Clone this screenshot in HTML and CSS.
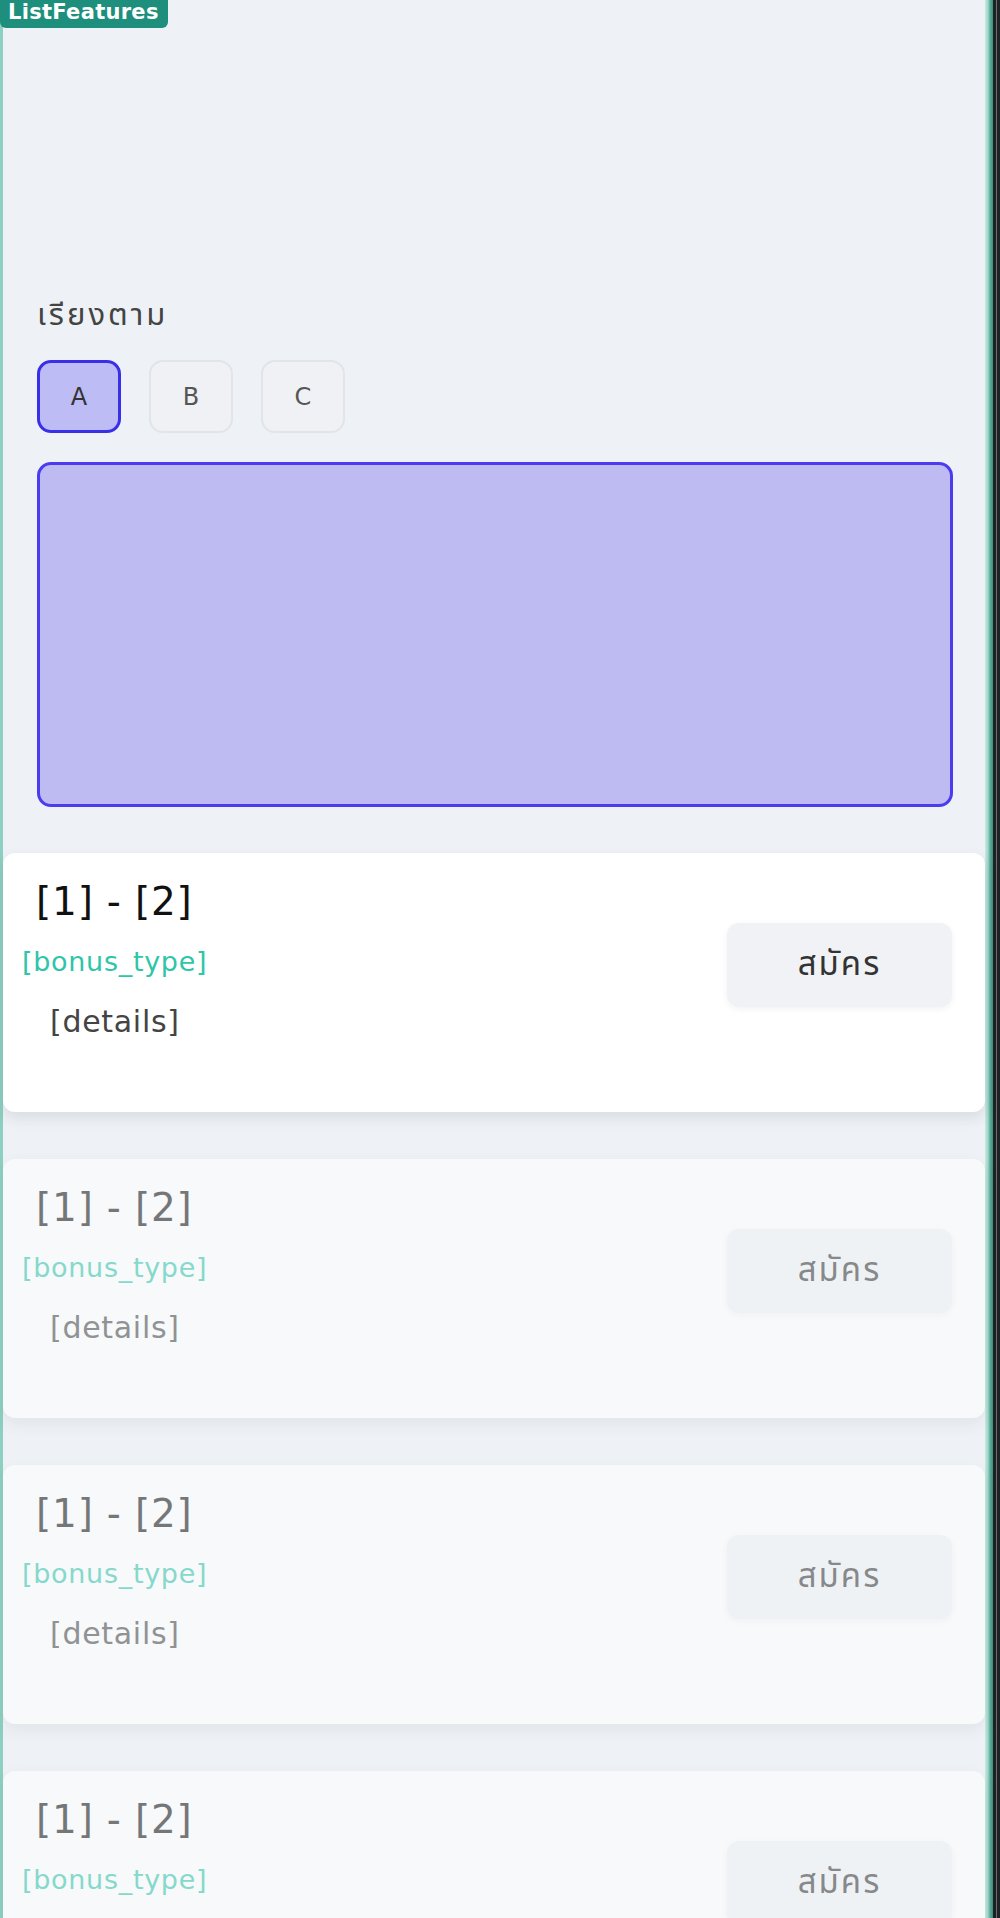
FILE: index.html
```html
<!DOCTYPE html>
<html lang="th">
<head>
<meta charset="utf-8">
<title>ListFeatures</title>
<link rel="stylesheet" href="styles.css">
</head>
<body>
<div class="page">
  <div class="frame">
    <div class="badge">ListFeatures</div>
    <section class="sort">
      <div class="sort-label">เรียงตาม</div>
      <div class="sort-buttons">
        <button class="chip chip-active">A</button>
        <button class="chip">B</button>
        <button class="chip">C</button>
      </div>
      <div class="panel"></div>
    </section>
    <section class="list">
      <div class="card">
        <div class="card-info">
          <div class="card-title">[1] - [2]</div>
          <div class="card-type">[bonus_type]</div>
          <div class="card-details">[details]</div>
        </div>
        <button class="apply">สมัคร</button>
      </div>
      <div class="card card-faded">
        <div class="card-info">
          <div class="card-title">[1] - [2]</div>
          <div class="card-type">[bonus_type]</div>
          <div class="card-details">[details]</div>
        </div>
        <button class="apply">สมัคร</button>
      </div>
      <div class="card card-faded">
        <div class="card-info">
          <div class="card-title">[1] - [2]</div>
          <div class="card-type">[bonus_type]</div>
          <div class="card-details">[details]</div>
        </div>
        <button class="apply">สมัคร</button>
      </div>
      <div class="card card-faded">
        <div class="card-info">
          <div class="card-title">[1] - [2]</div>
          <div class="card-type">[bonus_type]</div>
          <div class="card-details">[details]</div>
        </div>
        <button class="apply">สมัคร</button>
      </div>
    </section>
  </div>
  <div class="edge"></div>
</div>
</body>
</html>
```

FILE: styles.css
```css
* { box-sizing: border-box; }

html, body {
  margin: 0;
  padding: 0;
  height: 1918px;
  overflow: hidden;
  background: #eef2f6;
  font-family: "DejaVu Sans", "Noto Sans", "Noto Sans Thai", sans-serif;
  color: #222;
}

.page {
  display: flex;
  width: 1000px;
  height: 1918px;
}

.frame {
  position: relative;
  flex: 1;
  border-left: 3px solid #8dcfc0;
  background: #eef2f6;
}

.edge {
  width: 15px;
  background: linear-gradient(to right, #cde9e2 0, #9fd6c9 3px, #5fae9c 5px, #3f8c7c 8px, #1e2224 8px, #1e2224 11px, #6b6f72 11px, #6b6f72 12px, #1e2224 12px);
}

.badge {
  position: absolute;
  top: 0;
  left: -3px;
  height: 28px;
  padding: 0 9px 0 8px;
  background: #1d8f7c;
  color: #fff;
  font-family: "DejaVu Sans", sans-serif;
  font-weight: 700;
  font-size: 21px;
  line-height: 25px;
  letter-spacing: 0.3px;
  border-radius: 0 0 6px 6px;
}

.sort {
  padding: 292px 32px 0 34px;
}

.sort-label {
  font-size: 31px;
  line-height: 44px;
  letter-spacing: 3px;
  color: #444;
}

.sort-buttons {
  display: flex;
  gap: 28px;
  margin-top: 24px;
}

.chip {
  width: 84px;
  height: 73px;
  border: 2px solid #e1e4e9;
  border-radius: 14px;
  background: #eff1f5;
  font-family: "DejaVu Sans", sans-serif;
  font-size: 24px;
  color: #555;
  padding: 0;
}

.chip-active {
  background: #bdbcf4;
  border: 3px solid #3a2fe8;
  color: #333;
}

.panel {
  margin-top: 29px;
  height: 345px;
  background: #bebbf3;
  border: 3px solid #4b3cf0;
  border-radius: 14px;
}

.list {
  display: flex;
  flex-direction: column;
  gap: 47px;
  margin-top: 46px;
}

.card {
  display: flex;
  align-items: center;
  justify-content: space-between;
  height: 259px;
  padding: 19px 33px 60px 0;
  background: #fff;
  border-radius: 12px;
  box-shadow: 0 6px 14px rgba(30, 40, 60, 0.10);
}

.card-faded {
  opacity: 0.55;
}

.card-info {
  display: flex;
  flex-direction: column;
}

.card-title {
  padding-left: 33px;
  font-size: 39px;
  line-height: 60px;
  letter-spacing: 0.8px;
  color: #111;
}

.card-type {
  padding-left: 19px;
  font-size: 27px;
  line-height: 60px;
  letter-spacing: 0.7px;
  color: #2ec5a9;
}

.card-details {
  padding-left: 47px;
  font-size: 30px;
  line-height: 60px;
  letter-spacing: 0.7px;
  color: #444;
}

.apply {
  width: 225px;
  height: 84px;
  margin-top: 6px;
  border: none;
  border-radius: 12px;
  background: #f0f2f5;
  box-shadow: 0 2px 6px rgba(30, 40, 60, 0.06);
  font-family: "DejaVu Sans", "Noto Sans Thai", sans-serif;
  font-size: 33px;
  letter-spacing: 2px;
  color: #333;
}
```
